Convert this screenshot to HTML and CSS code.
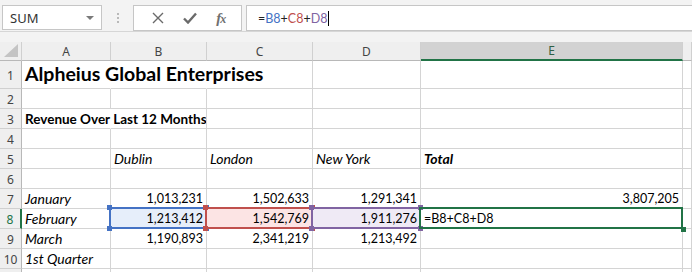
FILE: index.html
```html
<!DOCTYPE html>
<html lang="en">
<head>
    <meta charset="UTF-8">
    <title>Revenue - Excel</title>
    <link rel="stylesheet" href="styles.css">
</head>
<body>

    <div class="toolbar">
        <div class="namebox">
            <span>SUM</span>
            <svg class="dropdown" width="8" height="5" viewBox="0 0 8 5"><path d="M0 0h8L4 4z" fill="#7a7a7a"/></svg>
        </div>
        <div class="grip"><i></i><i></i><i></i></div>
        <div class="fbuttons">
            <svg width="12" height="12" viewBox="0 0 12 12"><path d="M1 1l10 10M11 1L1 11" stroke="#6a6a6a" stroke-width="1.4" fill="none"/></svg>
            <svg width="14" height="12" viewBox="0 0 14 12"><path d="M1 6.5l4 4L13 1.5" stroke="#6a6a6a" stroke-width="2.4" fill="none"/></svg>
            <span class="fx"><i>f</i><i class="x">x</i></span>
        </div>
        <div class="finput">=<span class="c-blue">B8</span>+<span class="c-red">C8</span>+<span class="c-purple">D8</span><span class="caret"></span></div>
    </div>

    <div class="sheet">
        <div class="ch corner"><svg width="14" height="13" viewBox="0 0 14 13"><path d="M14 0v13H0z" fill="#c4c4c4"/></svg></div>
        <div class="ch">A</div>
        <div class="ch">B</div>
        <div class="ch">C</div>
        <div class="ch">D</div>
        <div class="ch ch-sel">E</div>
        <div class="ch"></div>

        <div class="rh">1</div>
        <div class="cell spill title">Alpheius Global Enterprises</div>
        <div class="cell spill"></div>
        <div class="cell"></div>
        <div class="cell"></div>
        <div class="cell"></div>
        <div class="cell"></div>

        <div class="rh">2</div>
        <div class="cell"></div>
        <div class="cell"></div>
        <div class="cell"></div>
        <div class="cell"></div>
        <div class="cell"></div>
        <div class="cell"></div>

        <div class="rh">3</div>
        <div class="cell spill subtitle">Revenue Over Last 12 Months</div>
        <div class="cell"></div>
        <div class="cell"></div>
        <div class="cell"></div>
        <div class="cell"></div>
        <div class="cell"></div>

        <div class="rh">4</div>
        <div class="cell"></div>
        <div class="cell"></div>
        <div class="cell"></div>
        <div class="cell"></div>
        <div class="cell"></div>
        <div class="cell"></div>

        <div class="rh">5</div>
        <div class="cell"></div>
        <div class="cell label">Dublin</div>
        <div class="cell label">London</div>
        <div class="cell label">New York</div>
        <div class="cell label bold">Total</div>
        <div class="cell"></div>

        <div class="rh">6</div>
        <div class="cell"></div>
        <div class="cell"></div>
        <div class="cell"></div>
        <div class="cell"></div>
        <div class="cell"></div>
        <div class="cell"></div>

        <div class="rh">7</div>
        <div class="cell label">January</div>
        <div class="cell num">1,013,231</div>
        <div class="cell num">1,502,633</div>
        <div class="cell num">1,291,341</div>
        <div class="cell num">3,807,205</div>
        <div class="cell"></div>

        <div class="rh rh-sel">8</div>
        <div class="cell label">February</div>
        <div class="cell num ref ref-b">1,213,412</div>
        <div class="cell num ref ref-c">1,542,769</div>
        <div class="cell num ref ref-d">1,911,276</div>
        <div class="cell formula active">=B8+C8+D8</div>
        <div class="cell"></div>

        <div class="rh">9</div>
        <div class="cell label">March</div>
        <div class="cell num">1,190,893</div>
        <div class="cell num">2,341,219</div>
        <div class="cell num">1,213,492</div>
        <div class="cell"></div>
        <div class="cell"></div>

        <div class="rh">10</div>
        <div class="cell label">1st Quarter</div>
        <div class="cell"></div>
        <div class="cell"></div>
        <div class="cell"></div>
        <div class="cell"></div>
        <div class="cell"></div>

        <div class="rh"></div>
        <div class="cell"></div>
        <div class="cell"></div>
        <div class="cell"></div>
        <div class="cell"></div>
        <div class="cell"></div>
        <div class="cell"></div>
    </div>

</body>
</html>
```

FILE: styles.css
```css
body {
    margin: 0;
    background-color: #f3f3f3;
    font-family: Lato, "Liberation Sans", sans-serif;
    overflow: hidden;
}

/* --- formula bar --- */
.toolbar {
    height: 26px;
    padding-top: 5px;
    border-bottom: 1px solid #d6d6d6;
    display: flex;
    align-items: flex-start;
}
.namebox {
    margin-left: 2px;
    width: 100px;
    height: 25px;
    box-sizing: border-box;
    border: 1px solid #c6c6c6;
    background: #fff;
    display: flex;
    align-items: center;
    justify-content: space-between;
    padding: 0 7px;
    font-family: "Noto Sans", sans-serif;
    font-size: 13px;
    color: #333;
}
.dropdown { margin-top: 1px; }
.grip {
    width: 31px;
    height: 25px;
    display: flex;
    flex-direction: column;
    align-items: center;
    justify-content: center;
    gap: 2px;
}
.grip i {
    width: 2px;
    height: 2px;
    background: #b9b9b9;
}
.fbuttons {
    width: 109px;
    height: 26px;
    box-sizing: border-box;
    border: 1px solid #c6c6c6;
    background: #fff;
    display: flex;
    align-items: center;
    justify-content: space-around;
    padding: 0 6px 0 8px;
}
.fx {
    font-family: "Liberation Serif", serif;
    font-style: italic;
    font-weight: bold;
    font-size: 15px;
    color: #707070;
    letter-spacing: -1px;
}
.fx .x { font-size: 12px; }
.finput {
    flex: 1;
    margin-left: 4px;
    height: 26px;
    box-sizing: border-box;
    border: 1px solid #c6c6c6;
    border-right: none;
    background: #fff;
    display: flex;
    align-items: center;
    padding-left: 11px;
    font-size: 12.5px;
    color: #222;
}
.c-blue { color: #4472c4; }
.c-red { color: #c0504d; }
.c-purple { color: #8064a2; }
.caret {
    width: 1px;
    height: 15px;
    background: #000;
    margin-left: 1px;
}

/* --- sheet grid --- */
.sheet {
    margin-top: 10px;
    display: grid;
    grid-template-columns: 22px 89px 96px 106px 108px 262px 1fr;
    grid-template-rows: 19px 28px repeat(10, 20px);
    background: #fff;
    font-size: 12.5px;
    color: #000;
}
.ch, .rh {
    background: #efefef;
    color: #444;
    font-family: "Noto Sans", sans-serif;
    font-size: 12px;
    box-sizing: border-box;
    display: flex;
    align-items: center;
    justify-content: center;
}
.ch {
    border-right: 1px solid #d0d0d0;
    border-bottom: 1px solid #b8b8b8;
}
.ch.corner {
    justify-content: flex-end;
    align-items: flex-end;
    padding: 0 3px 3px 0;
}
.ch-sel {
    background: #d2d2d2;
    color: #2f5f44;
    border-bottom: 2px solid #217346;
}
.rh {
    border-right: 1px solid #b8b8b8;
    border-bottom: 1px solid #d0d0d0;
    padding-top: 2px;
}
.rh-sel {
    color: #217346;
    border-right: 2px solid #217346;
}
.cell {
    border-right: 1px solid #d4d4d4;
    border-bottom: 1px solid #d4d4d4;
    box-sizing: border-box;
    display: flex;
    align-items: flex-end;
    padding: 0 3px 2px 3px;
    white-space: nowrap;
    min-width: 0;
}
.spill { border-right-color: transparent; }
.title {
    font-weight: bold;
    font-size: 19.5px;
    padding-bottom: 3px;
}
.subtitle {
    font-weight: bold;
    font-size: 13.5px;
    padding-bottom: 1px;
}
.label {
    font-style: italic;
    font-size: 14px;
    padding-bottom: 1px;
}
.bold { font-weight: bold; }
.num { justify-content: flex-end; }
.formula { font-size: 12.5px; }

/* --- formula reference highlights --- */
.ref, .active { position: relative; }
.ref::before, .active::before {
    content: "";
    position: absolute;
    left: -2px;
    top: -2px;
    right: -1px;
    bottom: -1px;
    border: 2px solid;
}
.ref::after {
    content: "";
    position: absolute;
    left: -4px;
    top: -4px;
    width: 5px;
    height: 5px;
}
.ref-b { background: #e6eefa; }
.ref-b::before { border-color: #4472c4; }
.ref-b::after { background: #4472c4; box-shadow: 97px 0 #4472c4, 0 21px #4472c4, 97px 21px #4472c4; }
.ref-c { background: #fce4e4; }
.ref-c::before { border-color: #c0504d; }
.ref-c::after { background: #c0504d; box-shadow: 107px 0 #c0504d, 0 21px #c0504d, 107px 21px #c0504d; }
.ref-d { background: #efeaf5; }
.ref-d::before { border-color: #8064a2; }
.ref-d::after { background: #8064a2; box-shadow: 109px 0 #8064a2, 0 21px #8064a2, 109px 21px #8064a2; }
.active::before { border-color: #217346; }
.active::after {
    content: "";
    position: absolute;
    right: -4px;
    bottom: -4px;
    width: 5px;
    height: 5px;
    background: #217346;
}
```
